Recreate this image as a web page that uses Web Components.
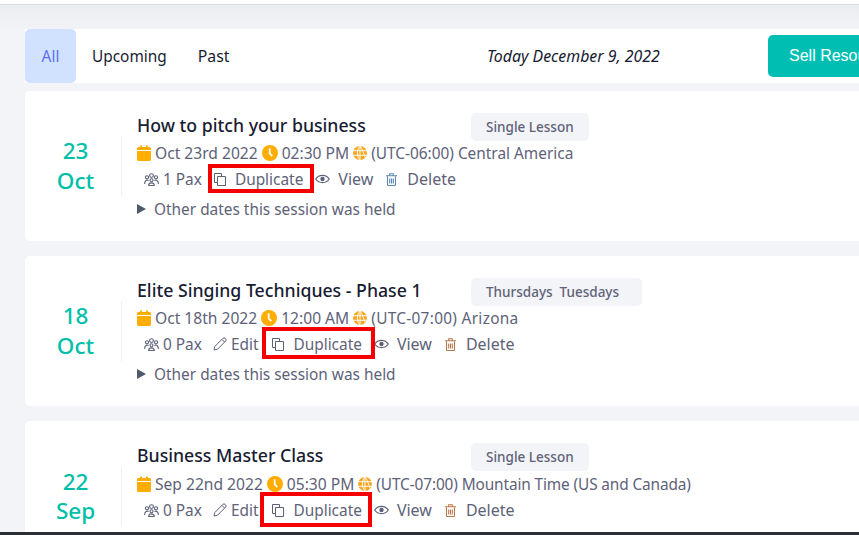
<!DOCTYPE html>
<html>
<head>
<meta charset="utf-8">
<title>Sessions</title>
<style>
	html, body { margin: 0; height: 100%; overflow: hidden; }
	body {
		width: 859px;
		height: 535px;
		background: #f3f4f8;
		font-family: "Noto Sans", "Open Sans", sans-serif;
		color: #3f4254;
	}
</style>
</head>
<body>
<session-page>
	<session-tabs slot="tabs" today="Today December 9, 2022"></session-tabs>
	<session-card day="23" month="Oct" tag="Single Lesson" date="Oct 23rd 2022" time="02:30 PM" zone="(UTC-06:00) Central America" pax="1 Pax" trash="#5b87b5" mark="1"></session-card>
	<session-card day="18" month="Oct" tag="Thursdays&nbsp; Tuesdays" date="Oct 18th 2022" time="12:00 AM" zone="(UTC-07:00) Arizona" pax="0 Pax" edit trash="#b8794a" mark="2"></session-card>
	<session-card day="22" month="Sep" tag="Single Lesson" date="Sep 22nd 2022" time="05:30 PM" zone="(UTC-07:00) Mountain Time (US and Canada)" pax="0 Pax" edit trash="#b8794a" mark="3"></session-card>
</session-page>

<script>
const ICONS = {
	calendar: `<svg width="14" height="16" viewBox="0 0 14 16"><path fill="#ffad00" d="M0 6h14v8.500a1.500 1.500 0 0 1-1.500 1.500h-11A1.500 1.500 0 0 1 0 14.500zM1.500 2H3V.5h2V2h4V.5h2V2h1.500A1.500 1.500 0 0 1 14 3.500V5H0V3.500A1.500 1.500 0 0 1 1.500 2z"/></svg>`,
	clock: `<svg width="16" height="16" viewBox="0 0 16 16"><circle cx="8" cy="8" r="8" fill="#ffad00"/><path d="M7.700 3.200v5.300l2.600 2.600" fill="none" stroke="#fff" stroke-width="1.800"/></svg>`,
	globe: `<svg width="14" height="14" viewBox="0 0 14 14" fill="none"><circle cx="7" cy="7" r="7" fill="#f5a623"/><path d="M0 4.700h14M0 9.300h14M7 0v14M7 0C3.500 3.500 3.500 10.500 7 14M7 0c3.500 3.500 3.500 10.500 7 14" stroke="#fff" stroke-width=".9"/></svg>`,
	people: `<svg width="15" height="13" viewBox="0 0 15 13" fill="none" stroke="#5e6278" stroke-width="1.100"><circle cx="7.500" cy="2.600" r="1.900"/><circle cx="3" cy="4.300" r="1.600"/><circle cx="12" cy="4.300" r="1.600"/><circle cx="7.500" cy="7.300" r="1.500"/><path d="M4.700 12.500c0-3.500 5.600-3.500 5.600 0zM.6 11c0-3.800 2.500-4.300 4-3.600M14.400 11c0-3.800-2.500-4.300-4-3.600"/></svg>`,
	copy: `<svg width="12" height="13" viewBox="0 0 12 13" fill="none" stroke="#5e6278" stroke-width="1"><path d="M3.500 9.500h-3v-9h7v3"/><path d="M3.500 3.500h8v9h-8z"/></svg>`,
	eye: `<svg width="15" height="10" viewBox="0 0 15 10" fill="none" stroke="#5e6278" stroke-width="1.200"><path d="M.7 5C4 .2 11 .2 14.300 5 11 9.800 4 9.800.7 5z"/><circle cx="7.500" cy="5" r="2.200" fill="#5e6278" stroke="none"/></svg>`,
	pencil: `<svg width="14" height="14" viewBox="0 0 14 14" fill="none" stroke="#5e6278" stroke-width="1"><path d="M1 13l.8-3.500L10 1.300a1.400 1.400 0 0 1 2 0l.7.7a1.400 1.400 0 0 1 0 2L4.500 12.200z"/><path d="M9 2.500l2.500 2.500"/></svg>`,
	trash: c => `<svg width="11" height="13" viewBox="0 0 11 13" fill="none" stroke="${c}" stroke-width="1.100"><path d="M1.500 3.500v8.200c0 .5.300.8.800.8h6.400c.5 0 .8-.3.800-.8V3.500M0 2.800h11M3.700 2.500V.8h3.600v1.700M3.700 5.500v5M5.500 5.500v5M7.300 5.500v5"/></svg>`
};

// page shell: grey strip on top, then the list column that runs off the right edge
class SessionPage extends HTMLElement {
	constructor() {
		super();
		this.attachShadow({ mode: 'open' }).innerHTML = `
			<style>
				:host { display: block; position: relative; height: 535px; overflow: hidden; }
				.top { height: 4px; background: #fff; border-bottom: 1px solid #d9dade; }
				.fade { height: 24px; background: linear-gradient(#ecedf1, #f2f3f7); }
				.list { display: flex; flex-direction: column; width: 860px; margin-left: 25px; }
				.foot { position: absolute; left: 0; right: 0; bottom: 0; height: 3px; background: #2b2e33; }
			</style>
			<div class="top"></div>
			<div class="fade"></div>
			<div class="list">
				<slot name="tabs"></slot>
				<slot></slot>
			</div>
			<div class="foot"></div>
		`;
	}
}

class SessionTabs extends HTMLElement {
	constructor() {
		super();
		this.attachShadow({ mode: 'open' }).innerHTML = `
			<style>
				:host { display: flex; align-items: center; height: 54px; background: #fff; margin-bottom: 8px; font-size: 15.400px; color: #181c32; }
				.tab { height: 54px; line-height: 55px; box-sizing: border-box; }
				.all { width: 51px; text-align: center; background: #d0e2ff; color: #5a6ff0; border-radius: 5px; }
				.up { margin-left: 16px; }
				.past { margin-left: 31px; font-size: 15.800px; }
				.today { position: absolute; left: 487px; font-style: italic; font-size: 15.900px; }
				.sell {
					position: absolute; left: 768px; top: 35px; width: 120px; height: 42px; line-height: 41px;
					padding-left: 21px; box-sizing: border-box; background: #00bfb2; color: #fff; border-radius: 5px;
					font-family: "Liberation Sans", sans-serif; font-size: 16px; white-space: nowrap;
				}
			</style>
			<div class="tab all">All</div>
			<div class="tab up">Upcoming</div>
			<div class="tab past">Past</div>
			<div class="today">${this.getAttribute('today')}</div>
			<div class="sell">Sell Resources</div>
		`;
	}
}

class SessionCard extends HTMLElement {
	constructor() {
		super();
		const a = n => this.getAttribute(n);
		const titles = { 1: 'How to pitch your business', 2: 'Elite Singing Techniques - Phase 1', 3: 'Business Master Class' };
		const mark = a('mark');
		const hasEdit = this.hasAttribute('edit');
		this.attachShadow({ mode: 'open' }).innerHTML = `
			<style>
				:host { display: block; position: relative; height: 150px; background: #fff; border-radius: 5px; margin-bottom: 15px; font-size: 15.400px; color: #5e6278; }
				.wrap { display: flex; height: 100%; }
				.date { width: 97px; height: 60px; margin-top: 45px; padding-left: 5px; box-sizing: border-box; border-right: 1px solid #eff0f3; text-align: center; color: #00bfa9; font-size: 22.500px; font-weight: 500; line-height: 30px; }
				.body { margin-left: 15px; padding-top: 22px; flex: 1; }
				.head { display: flex; height: 28px; align-items: center; }
				.title { width: 334px; padding-bottom: 5px; font-size: 17.700px; font-weight: 500; color: #181c32; white-space: nowrap; }
				.tag { height: 28px; line-height: 28px; padding: 0 15px; background: #f3f4f8; border-radius: 5px; font-size: 13.500px; font-weight: 500; color: #5e6278; white-space: nowrap; }
				.row { display: flex; align-items: center; height: 24px; white-space: nowrap; }
				.meta { gap: 4px; font-size: 15.600px; }
				.zone { font-size: 15.400px; }
				.acts { margin-left: 7px; height: 28px; }
				.acts svg { flex: none; }
				.wide { font-size: 16px; }
				.more { height: 28px; margin-top: 2px; }
				.arrow { width: 0; height: 0; border-left: 9px solid #4f5b6b; border-top: 5px solid transparent; border-bottom: 5px solid transparent; margin-right: 8px; }
				.box { position: absolute; border: 4px solid #f50000; box-sizing: border-box; }
				.m1 { left: 183px; top: 73px; width: 106px; height: 29px; }
				.m2 { left: 237px; top: 71px; width: 113px; height: 32px; }
				.m3 { left: 235px; top: 71px; width: 112px; height: 35px; }
				.card2 .tag { padding-right: 23px; }
				.card2 .zone { letter-spacing: .3px; }
				.card3 .zone { letter-spacing: -.12px; }
				.card3 .date { margin-top: 46px; line-height: 29px; }
				.card3 .meta { margin-top: 1px; }
			</style>
			<div class="wrap card${mark}">
				<div class="date">${a('day')}<br>${a('month')}</div>
				<div class="body">
					<div class="head"><div class="title">${titles[mark]}</div><div class="tag">${a('tag')}</div></div>
					<div class="row meta">
						${ICONS.calendar}<span>${a('date')}</span>${ICONS.clock}<span>${a('time')}</span>${ICONS.globe}<span class="zone">${a('zone')}</span>
					</div>
					<div class="row acts">
						${ICONS.people}<span style="margin-left:4px">${a('pax')}</span>
						${hasEdit ? `<span style="width:11px"></span>${ICONS.pencil}<span style="margin-left:4px">Edit</span>` : ''}
						<span style="width:${hasEdit ? 14 : 12}px"></span>${ICONS.copy}<span style="margin-left:9px">Duplicate</span>
						<span style="width:12px"></span>${ICONS.eye}<span class="wide" style="margin-left:8px">View</span>
						<span style="width:13px"></span>${ICONS.trash(a('trash'))}<span class="wide" style="margin-left:10px">Delete</span>
					</div>
					<div class="row more"><span class="arrow"></span>Other dates this session was held</div>
				</div>
			</div>
			<div class="box m${mark}"></div>
		`;
	}
}

customElements.define('session-page', SessionPage);
customElements.define('session-tabs', SessionTabs);
customElements.define('session-card', SessionCard);
</script>
</body>
</html>
